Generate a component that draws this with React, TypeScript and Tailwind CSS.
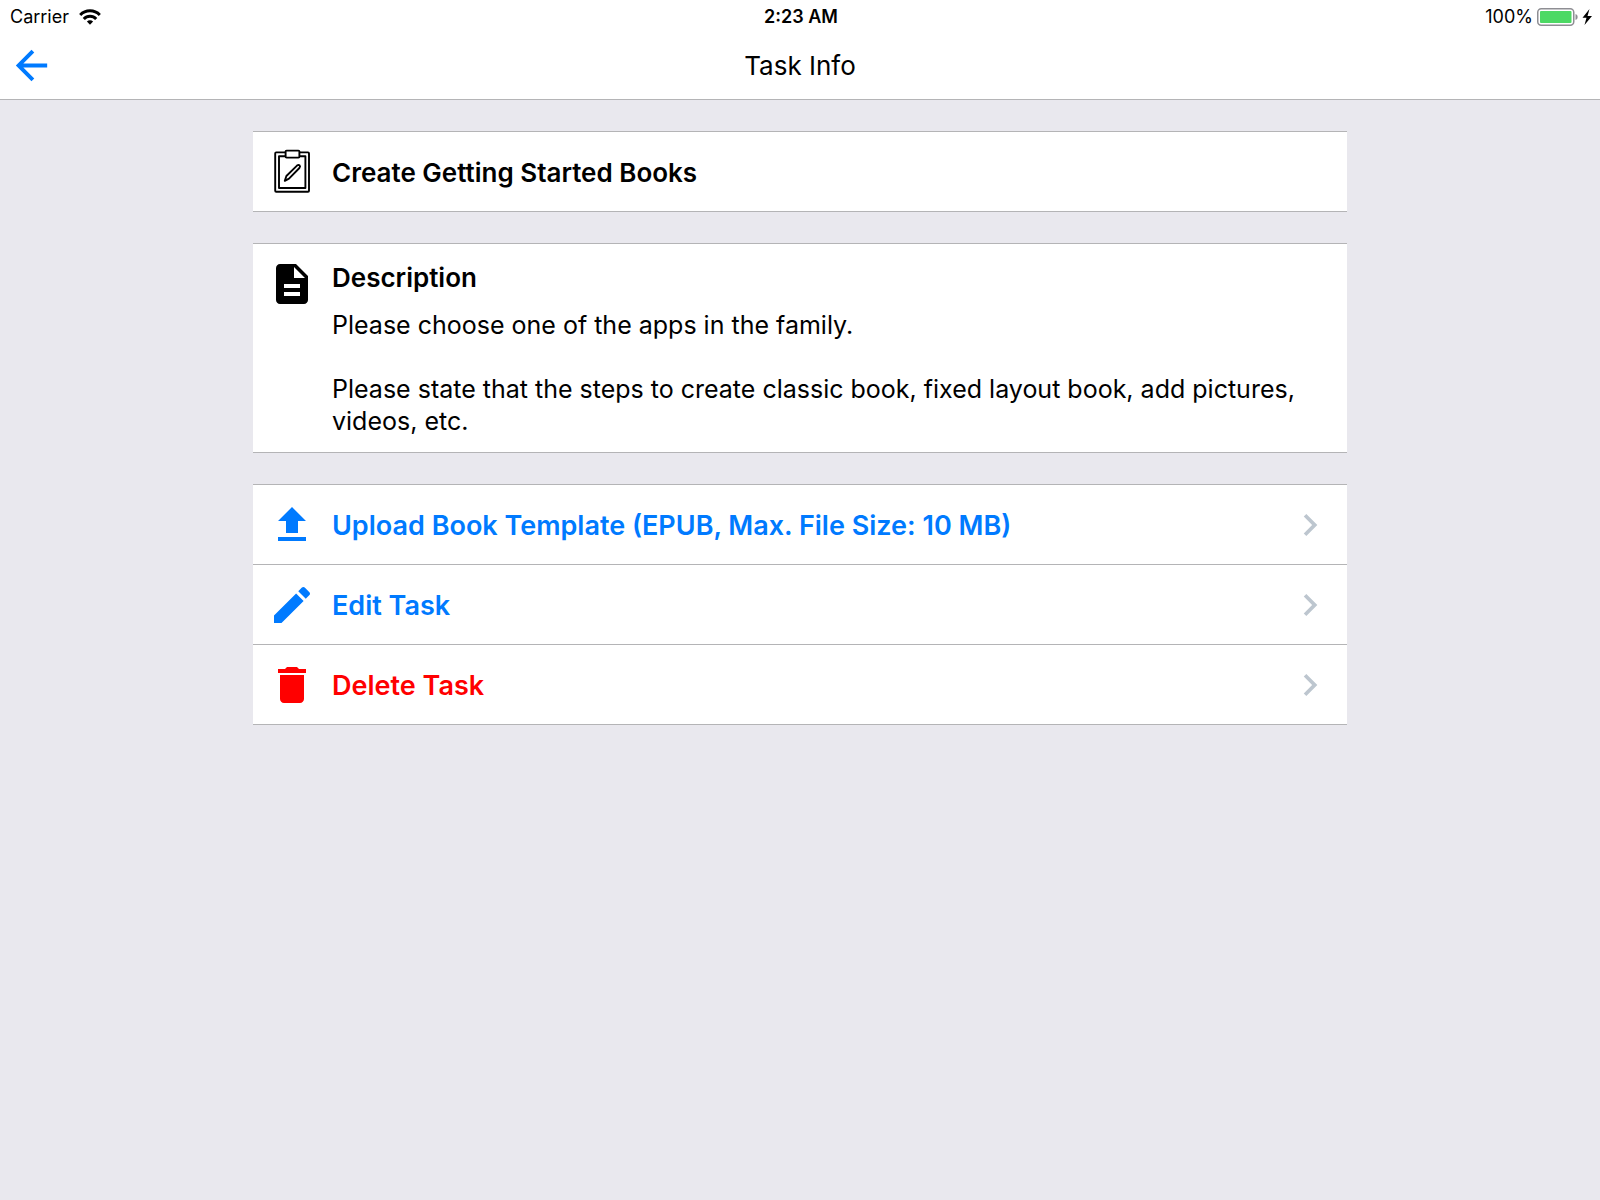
import type { ReactNode } from "react";

type IconProps = {
  className?: string;
};

const iconPaths = {
  back: "M20 11H7.83l5.59-5.59L12 4l-8 8 8 8 1.41-1.41L7.83 13H20v-2z",
  description:
    "M14 2H6c-1.1 0-1.99.9-1.99 2L4 20c0 1.1.89 2 1.99 2H18c1.1 0 2-.9 2-2V8l-6-6zm2 16H8v-2h8v2zm0-4H8v-2h8v2zm-3-5V3.5L18.5 9H13z",
  upload: "M9 16h6v-6h4l-7-7-7 7h4zm-4 2h14v2H5z",
  edit: "M3 17.25V21h3.75L17.81 9.94l-3.75-3.75L3 17.25zM20.71 7.04c.39-.39.39-1.02 0-1.41l-2.34-2.34c-.39-.39-1.02-.39-1.41 0l-1.83 1.83 3.75 3.75 1.83-1.83z",
  trash: "M6 19c0 1.1.9 2 2 2h8c1.1 0 2-.9 2-2V7H6v12zM19 4h-3.5l-1-1h-5l-1 1H5v2h14V4z",
  chevron: "M10 6L8.59 7.41 13.17 12l-4.58 4.59L10 18l6-6z",
};

function Icon({ name, className }: IconProps & { name: keyof typeof iconPaths }) {
  return (
    <svg viewBox="0 0 24 24" fill="currentColor" className={className} aria-hidden="true">
      <path d={iconPaths[name]} />
    </svg>
  );
}

function ClipboardIcon({ className }: IconProps) {
  return (
    <svg viewBox="0 0 48 48" fill="none" stroke="currentColor" strokeWidth="1.9" strokeLinejoin="round" className={className} aria-hidden="true">
      <rect x="7.2" y="4.4" width="33.8" height="39.4" rx="1" />
      <rect x="11" y="8.2" width="26.4" height="31.8" />
      <rect x="17.6" y="2.6" width="13.8" height="7" rx="1" fill="white" />
      <path d="M16.8 32.8l1.6-4.8L29 17.6q1.6-1.2 2.6-.2t-.2 2.6L21 30.600z" />
    </svg>
  );
}

function WifiIcon({ className }: IconProps) {
  return (
    <svg viewBox="0 0 22 16" fill="none" stroke="currentColor" strokeWidth="3" className={className} aria-hidden="true">
      <path d="M1.2 6a13.6 13.6 0 0 1 19.6 0" />
      <path d="M4.8 10a8.6 8.6 0 0 1 12.4 0" />
      <path d="M11 15.8l-3.1-3.2a4.4 4.4 0 0 1 6.2 0z" fill="currentColor" stroke="none" />
    </svg>
  );
}

function BatteryIcon({ className }: IconProps) {
  return (
    <svg viewBox="0 0 55 18" className={className} aria-hidden="true">
      <rect x="0.75" y="0.75" width="36" height="16.5" rx="3.5" fill="none" stroke="#8e8e93" strokeWidth="1.5" />
      <rect x="3" y="3" width="31.5" height="12" rx="1" fill="#4cd964" />
      <path d="M38.5 6q2.2.5 2.2 3t-2.2 3z" fill="#8e8e93" />
      <path d="M52.5 1L45.5 9.8h4l-2 7.200L55 8h-4.500z" fill="black" />
    </svg>
  );
}

function Card({ children }: { children: ReactNode }) {
  return <section className="border-y border-[#b4b4b6] bg-white">{children}</section>;
}

const actions = [
  { icon: "upload", label: "Upload Book Template (EPUB, Max. File Size: 10 MB)", color: "text-[#007aff]" },
  { icon: "edit", label: "Edit Task", color: "text-[#007aff]" },
  { icon: "trash", label: "Delete Task", color: "text-[#ff0000]" },
] as const;

export default function App() {
  return (
    <div className="min-h-screen bg-[#e9e8ee] font-['Inter',sans-serif] text-black">
      <header className="border-b border-[#b4b4b6] bg-white">
        <div className="grid h-[33px] grid-cols-3 items-center pr-2 pl-2.5 text-lg">
          <div className="flex items-center gap-2.5">
            <span>Carrier</span>
            <WifiIcon className="h-4 w-[22px]" />
          </div>
          <span className="text-center font-semibold">2:23 AM</span>
          <div className="flex items-center justify-end gap-1">
            <span>100%</span>
            <BatteryIcon className="h-[18px] w-[55px]" />
          </div>
        </div>
        <div className="grid h-[66px] grid-cols-[48px_1fr_48px] items-center px-2 pb-0.5">
          <button type="button" aria-label="Back" className="text-[#007aff]">
            <Icon name="back" className="size-[47px]" />
          </button>
          <h1 className="text-center text-[26px]">Task Info</h1>
        </div>
      </header>

      <main className="mx-auto flex max-w-[1094px] flex-col gap-[31px] py-[31px]">
        <Card>
          <div className="flex h-[79px] items-center gap-4 px-[15px]">
            <ClipboardIcon className="size-12 shrink-0" />
            <h2 className="pt-0.5 text-[26px] font-semibold">Create Getting Started Books</h2>
          </div>
        </Card>

        <Card>
          <div className="flex gap-4 px-[15px] pt-4 pb-[15px]">
            <Icon name="description" className="size-12 shrink-0" />
            <div className="pt-0.5 text-[25px] leading-8">
              <h2 className="mb-[15px] text-[26px] leading-8 font-semibold">Description</h2>
              <p className="mb-8">Please choose one of the apps in the family.</p>
              <p>Please state that the steps to create classic book, fixed layout book, add pictures, videos, etc.</p>
            </div>
          </div>
        </Card>

        <Card>
          <ul className="divide-y divide-[#b4b4b6]">
            {actions.map(({ icon, label, color }) => (
              <li key={label}>
                <button type="button" className={`flex h-[79px] w-full items-center gap-4 px-[15px] text-left ${color}`}>
                  <Icon name={icon} className="size-12 shrink-0" />
                  <span className="flex-1 pt-1 text-[27px] font-semibold">{label}</span>
                  <Icon name="chevron" className="size-11 shrink-0 text-[#bdc6cf]" />
                </button>
              </li>
            ))}
          </ul>
        </Card>
      </main>
    </div>
  );
}
